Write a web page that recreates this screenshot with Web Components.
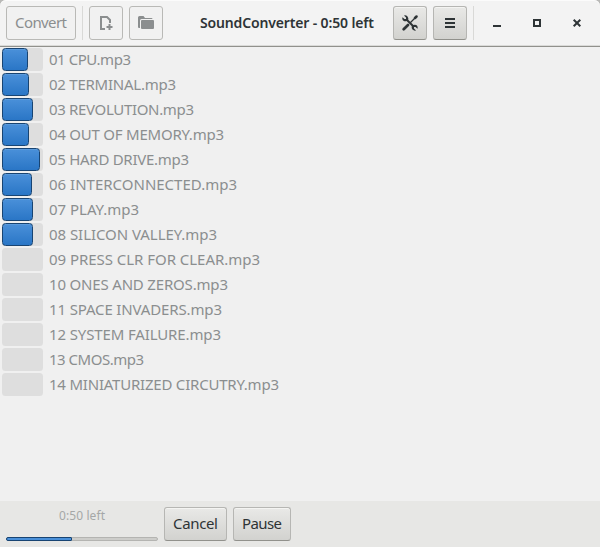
<!DOCTYPE html>
<html lang="en"><head><meta charset="utf-8"><title>SoundConverter</title>
<style>
html,body{margin:0;height:100%;overflow:hidden;background:#b9b9b7}
body{font:15px/20px "Noto Sans","Open Sans",sans-serif;color:#2e3436}
</style></head><body>
<sound-converter></sound-converter>
<script>
const define=(name,html,setup)=>customElements.define(name,class extends HTMLElement{
  connectedCallback(){
    if(this.shadowRoot)return;
    const t=document.createElement('template');t.innerHTML=html;
    this.attachShadow({mode:'open'}).append(t.content.cloneNode(true));
    if(setup)setup(this,this.shadowRoot);
  }
});

/* A single line of text, tracked to an exact advance width. */
define('fit-text',`<style>:host{display:block;white-space:pre;flex:none;overflow:visible}span{display:inline-block}</style><span></span>`,(el,r)=>{
  const s=r.querySelector('span');s.textContent=el.getAttribute('text');
  const w=+el.getAttribute('w');el.style.width=w+'px';
  const n=s.textContent.length;
  s.style.letterSpacing=((w-s.getBoundingClientRect().width)/(n-1))+'px';
});

define('gtk-button',`<style>
:host{display:flex;box-sizing:border-box;height:34px;width:34px;flex:none;align-items:center;justify-content:center;border:1px solid #b6b6b3;border-bottom-color:#91918c;border-radius:3px;background:linear-gradient(#e9e9e7,#d2d2cf);box-shadow:inset 0 1px #f4f4f2}
:host([disabled]){color:#8b8e8f;background:#f1f1f1;border-color:#b9b9b6;box-shadow:none}
::slotted(fit-text){margin-bottom:2px}
</style><slot></slot>`);

define('gtk-separator',`<style>:host{display:block;width:1px;height:34px;background:#d9d9d7;flex:none}</style>`);

define('title-bar',`<style>
:host{display:flex;box-sizing:border-box;height:47px;padding:6px 6px 0;background:#f3f3f3;border-bottom:1px solid #91918c;box-shadow:inset 0 1px #fbfbfb,inset 0 -1px #dadad8;align-items:flex-start;border-radius:6px 6px 0 0}
.title{width:174px;margin:7px 19px 0 37px;font-weight:600;font-size:14px}
svg{display:block;flex:none}
.controls{display:flex;height:34px;align-items:center;gap:24px;margin-left:15px}
</style>
<gtk-button disabled style="width:70px"><fit-text w="52" text="Convert"></fit-text></gtk-button>
<gtk-separator style="margin:0 6px"></gtk-separator>
<gtk-button disabled><svg width="16" height="16" viewBox="0 0 16 16" fill="none" stroke="currentColor" stroke-width="2"><path d="M7 14H3V2h6l3 3v3M11.500 9v6M8.500 12h6"/></svg></gtk-button>
<gtk-button disabled style="margin-left:6px"><svg width="16" height="16" viewBox="0 0 16 16" fill="currentColor"><path d="M0 12V2.500Q0 1 1.500 1H5.500L7 3h6.500q1 0 1 1H3.500Q2 4 2 5.500V13H1q-1 0-1-1zM4 5h11q1 0 1 1v7q0 1-1 1H4q-1 0-1-1V6q0-1 1-1z"/></svg></gtk-button>
<div class="title"><fit-text w="174" text="SoundConverter - 0:50 left"></fit-text></div>
<gtk-button><svg width="16" height="16" viewBox="0 0 16 16" fill="none" stroke="currentColor"><path d="M2 .5 4 2.500V4H2.500L.5 2.200Q-.3 5 1.800 6Q3.300 6.500 4.500 6L9.800 11.300Q9.300 13 10.500 14.600Q12 16 14 15.500L12 13.500V12H13.500L15.500 13.800Q16.200 11 14.200 10Q12.700 9.500 11.500 10L6.200 4.700Q6.700 3 5.500 1.400Q4 0 2 .5z" fill="currentColor" stroke="none"/><path d="M13.500 2.500 8 8" stroke-width="1.200"/><path d="m14.500 1.500-1.500 1.500" stroke-width="2.500" stroke-linecap="round"/><path d="m6 10-4.300 4.300" stroke-width="2.700" stroke-linecap="round"/></svg></gtk-button>
<gtk-button style="margin-left:6px"><svg width="16" height="16" viewBox="0 0 16 16" fill="currentColor"><path d="M3 3h10v2H3zm0 4h10v2H3zm0 4h10v2H3z"/></svg></gtk-button>
<gtk-separator style="margin-left:6px"></gtk-separator>
<div class="controls">
<svg width="16" height="16" viewBox="0 0 16 16"><path d="M4 10h8v2H4z" fill="currentColor"/></svg>
<svg width="16" height="16" viewBox="0 0 16 16"><path d="M5 5h6v6H5z" fill="none" stroke="currentColor" stroke-width="2"/></svg>
<svg width="16" height="16" viewBox="0 0 16 16"><path d="m4.700 4.700 6.600 6.600m0-6.600-6.600 6.600" stroke="currentColor" stroke-width="2"/></svg>
</div>`);

define('track-row',`<style>
:host{display:flex;height:25px;align-items:flex-start;color:#8b8e8f}
.trough{width:41px;height:23px;border-radius:3.500px;background:#dedede;margin-right:6px;flex:none}
.fill{box-sizing:border-box;height:23px;border:1px solid #184472;border-radius:3.500px;background:linear-gradient(#4a90d9,#2a76c6);box-shadow:inset 0 1px #5b9bdd}
fit-text{margin-top:1px}
</style><div class="trough"></div>`,(el,r)=>{
  const p=+el.getAttribute('fill');
  if(p){const d=document.createElement('div');d.className='fill';d.style.width=p+'px';r.querySelector('.trough').append(d);}
  const f=document.createElement('fit-text');f.setAttribute('text',el.getAttribute('name'));f.setAttribute('w',el.getAttribute('w'));r.append(f);
});

define('track-list',`<style>:host{display:block;box-sizing:border-box;flex:1;padding:1px 0 0 2px;background:#f0f0f0}</style>`,(el,r)=>{
  for(const [name,w,fill] of [
    ['01 CPU.mp3',82,26],['02 TERMINAL.mp3',127,27],['03 REVOLUTION.mp3',145,31],['04 OUT OF MEMORY.mp3',175,27],
    ['05 HARD DRIVE.mp3',140,38],['06 INTERCONNECTED.mp3',188,30],['07 PLAY.mp3',90,31],['08 SILICON VALLEY.mp3',168,31],
    ['09 PRESS CLR FOR CLEAR.mp3',211,0],['10 ONES AND ZEROS.mp3',179,0],['11 SPACE INVADERS.mp3',173,0],
    ['12 SYSTEM FAILURE.mp3',172,0],['13 CMOS.mp3',95,0],['14 MINIATURIZED CIRCUTRY.mp3',230,0]]){
    const t=document.createElement('track-row');
    t.setAttribute('name',name);t.setAttribute('w',w);t.setAttribute('fill',fill);r.append(t);
  }
});

define('status-bar',`<style>
:host{display:flex;box-sizing:border-box;height:46px;padding:6px;background:#e7e7e5;gap:6px}
.progress{width:152px;height:34px;display:flex;flex-direction:column;align-items:center;justify-content:space-between;color:#a5a7a7;font-size:12px;line-height:18px}
.trough{box-sizing:border-box;width:152px;height:4px;border:1px solid #b4b4b1;border-radius:2px;background:#cdcdca}
.fill{box-sizing:border-box;width:66px;height:4px;margin:-1px;border:1px solid #184472;border-radius:2px 1px 1px 2px;background:#4a90d9}
</style>
<div class="progress"><fit-text w="46" text="0:50 left"></fit-text><div class="trough"><div class="fill"></div></div></div>
<gtk-button style="width:63px"><fit-text w="45" text="Cancel"></fit-text></gtk-button>
<gtk-button style="width:58px"><fit-text w="40" text="Pause"></fit-text></gtk-button>`);

define('sound-converter',`<style>:host{display:flex;flex-direction:column;height:547px;width:600px}</style>
<title-bar></title-bar><track-list></track-list><status-bar></status-bar>`);
</script></body></html>
